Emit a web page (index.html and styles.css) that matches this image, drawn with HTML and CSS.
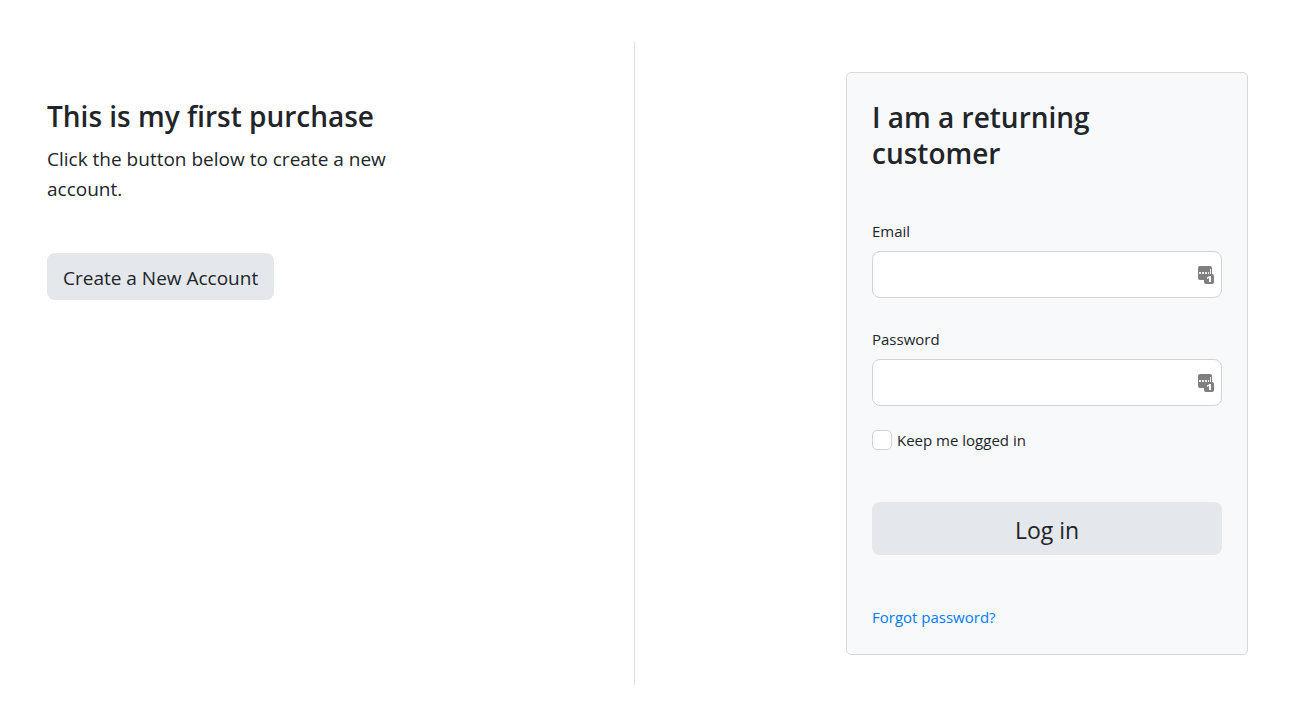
FILE: index.html
```html
<!DOCTYPE html>
<html lang="en">

<head>
  <meta charset="UTF-8">
  <meta name="viewport" content="width=device-width, initial-scale=1.0">
  <title>Log in</title>
  <link rel="stylesheet" href="styles.css">
</head>

<body>
  <main class="page">
    <section class="new-customer">
      <h2>This is my first purchase</h2>
      <p>Click the button below to create a new account.</p>
      <button type="button" class="btn">Create a New Account</button>
    </section>

    <section class="returning">
      <form class="card">
        <h2>I am a returning customer</h2>

        <div class="field">
          <label for="email">Email</label>
          <div class="input-wrap">
            <input type="email" id="email" name="email">
            <svg class="fill-icon" viewBox="0 0 18 20" aria-hidden="true">
              <rect x="1" y="1" width="14" height="14" rx="2" fill="#7f7f7f" />
              <path d="M2 7h2v2H2zM5 7h2v2H5zM8 7h2v2H8zM11 7h1v2h-1zM13 4h1v5h-1z" fill="#fff" fill-opacity=".85" />
              <rect x="7" y="9" width="10" height="10" rx="2" fill="#7f7f7f" />
              <path d="M10 12.500l2.500-1.500H14v6h-2v-4l-2 1z" fill="#fff" />
            </svg>
          </div>
        </div>

        <div class="field">
          <label for="password">Password</label>
          <div class="input-wrap">
            <input type="password" id="password" name="password">
            <svg class="fill-icon" viewBox="0 0 18 20" aria-hidden="true">
              <rect x="1" y="1" width="14" height="14" rx="2" fill="#7f7f7f" />
              <path d="M2 7h2v2H2zM5 7h2v2H5zM8 7h2v2H8zM11 7h1v2h-1zM13 4h1v5h-1z" fill="#fff" fill-opacity=".85" />
              <rect x="7" y="9" width="10" height="10" rx="2" fill="#7f7f7f" />
              <path d="M10 12.500l2.500-1.500H14v6h-2v-4l-2 1z" fill="#fff" />
            </svg>
          </div>
        </div>

        <div class="remember">
          <input type="checkbox" id="remember" name="remember">
          <label for="remember">Keep me logged in</label>
        </div>

        <button type="submit" class="btn btn-login">Log in</button>

        <a class="forgot" href="#">Forgot password?</a>
      </form>
    </section>
  </main>
</body>

</html>
```
FILE: styles.css
```css
* {
  box-sizing: border-box;
}

body {
  margin: 0;
  font-family: "Segoe UI", "Open Sans", sans-serif;
  font-size: 15px;
  line-height: 24px;
  color: #212529;
  background-color: #fff;
}

h2 {
  margin: 0;
  font-size: 28px;
  font-weight: 600;
  line-height: 36px;
}

.page {
  display: grid;
  grid-template-columns: 1fr 1fr;
  padding: 42px 44px 35px 0;
}

.new-customer {
  padding: 56px 0 0 47px;
  border-right: 1px solid #dee2e6;
}

.new-customer p {
  max-width: 350px;
  margin: 10px 0 49px;
  font-size: 19px;
  line-height: 30px;
}

.btn {
  padding: 10px 16px 7px;
  border: 0;
  border-radius: 8px;
  background-color: #e4e7ec;
  color: #212529;
  font-family: inherit;
  font-size: 19px;
  line-height: 30px;
  cursor: pointer;
}

.returning {
  padding: 30px 22px 30px 24px;
}

.card {
  max-width: 402px;
  margin-left: auto;
  padding: 26px 25px 25px;
  border: 1px solid #d6d9dd;
  border-radius: 5px;
  background-color: #f8f9fb;
}

.card h2 {
  max-width: 300px;
  margin-bottom: 48px;
}

.field {
  margin-bottom: 29px;
}

.field label {
  display: block;
  margin-bottom: 8px;
}

.input-wrap {
  position: relative;
}

.input-wrap input {
  display: block;
  width: 100%;
  height: 47px;
  padding: 8px 32px 8px 14px;
  border: 1px solid #ced4da;
  border-radius: 8px;
  background-color: #fff;
  font: inherit;
}

.fill-icon {
  position: absolute;
  top: 14px;
  right: 7px;
  width: 18px;
  height: 20px;
}

.remember {
  display: flex;
  align-items: center;
  gap: 5px;
  margin: -7px 0 50px;
}

.remember input {
  appearance: none;
  width: 20px;
  height: 20px;
  margin: 0;
  border: 1px solid #ced4da;
  border-radius: 5px;
  background-color: #fff;
}

.remember input:checked {
  background-color: #007bff;
}

.btn-login {
  width: 100%;
  margin-bottom: 50px;
  font-size: 23px;
  line-height: 36px;
}

.forgot {
  display: block;
  color: #007bff;
  text-decoration: none;
}
```
